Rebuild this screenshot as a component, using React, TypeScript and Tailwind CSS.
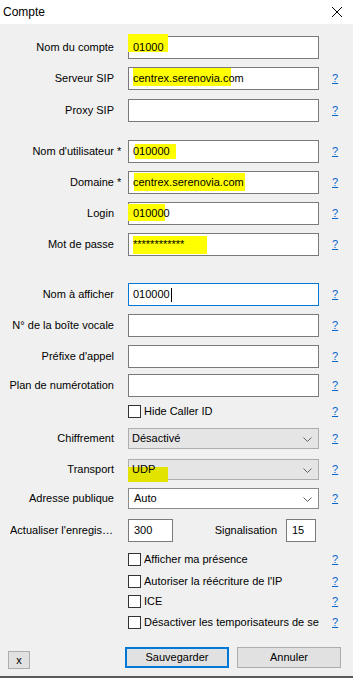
import React from "react";

function Help() {
  return <span className="ml-[13px] text-[11px] leading-none text-[#0066cc] underline">?</span>;
}

function Field({
  label,
  star,
  value,
  focused,
  hl,
  help = true,
  mt,
}: {
  label: string;
  star?: boolean;
  value?: string;
  focused?: boolean;
  hl?: string;
  help?: boolean;
  mt: string;
}) {
  return (
    <div className={`flex h-[23px] items-center ${mt}`}>
      <div className="w-[114px] text-right whitespace-nowrap">{label}</div>
      <div className="w-[14px] pl-[3px] text-[11px]">{star ? "*" : ""}</div>
      <div
        className={`relative flex h-[23px] w-[191px] items-center bg-white pl-[4px] ${
          focused ? "border border-[#0078d7]" : "border border-[#7a7a7a]"
        }`}
      >
        {hl && <span className={`absolute bg-[#ffff00] ${hl}`} />}
        <span className="relative whitespace-nowrap">{value}</span>
        {focused && <span className="relative ml-[1px] h-[14px] w-[1px] bg-black" />}
      </div>
      {help ? <Help /> : null}
    </div>
  );
}

function Chevron() {
  return (
    <svg width="9" height="5" viewBox="0 0 9 5" className="absolute right-[6px] top-[8px]">
      <path d="M0.5 0.5 L4.5 4.5 L8.5 0.5" fill="none" stroke="#606060" strokeWidth="1" />
    </svg>
  );
}

function Combo({ label, value, white, hl, mt }: { label: string; value: string; white?: boolean; hl?: boolean; mt: string }) {
  return (
    <div className={`flex h-[21px] items-center ${mt}`}>
      <div className="w-[114px] text-right whitespace-nowrap">{label}</div>
      <div className="w-[14px]" />
      <div
        className={`relative flex h-[21px] w-[191px] items-center border ${
          white ? "border-[#8a8a8a] bg-white pl-[5px]" : "border-[#adadad] bg-[#e5e5e5] pl-[3px]"
        }`}
      >
        {hl && <span className="absolute left-[-1px] top-[7px] h-[15px] w-[40px] bg-[#e3e300]" />}
        <span className="relative">{value}</span>
        <Chevron />
      </div>
      <Help />
    </div>
  );
}

function Check({ label, mt }: { label: string; mt: string }) {
  return (
    <div className={`flex h-[13px] items-center ${mt}`}>
      <div className="w-[128px]" />
      <div className="h-[13px] w-[13px] border border-[#333333] bg-white" />
      <div className="ml-[3px] w-[175px] overflow-hidden whitespace-nowrap">{label}</div>
      <Help />
    </div>
  );
}

export default function App() {
  return (
    <div className="flex h-[678px] w-[353px] flex-col bg-[#f0f0f0] font-['Liberation_Sans',Arial,sans-serif] text-[11px] text-black">
      {/* title bar */}
      <div className="flex h-[24px] items-center justify-between bg-white pl-[3px] pr-[11px]">
        <span className="text-[12px]">Compte</span>
        <svg width="10" height="10" viewBox="0 0 10 10">
          <path d="M0 0 L10 10 M10 0 L0 10" stroke="#000" strokeWidth="1" />
        </svg>
      </div>

      <Field label="Nom du compte" value="01000" help={false} mt="mt-[12px]" hl="left-[-1px] top-[-3px] h-[18px] w-[40px]" />
      <Field label="Serveur SIP" value="centrex.serenovia.com" mt="mt-[8px]" hl="left-[4px] top-[0px] h-[18px] w-[98px]" />
      <Field label="Proxy SIP" value="" mt="mt-[9px]" />

      <Field label="Nom d'utilisateur" star value="010000" mt="mt-[18px]" hl="left-[6px] top-[3px] h-[15px] w-[41px]" />
      <Field label="Domaine" star value="centrex.serenovia.com" mt="mt-[8px]" hl="left-[5px] top-[1px] h-[18px] w-[111px]" />
      <Field label="Login" value="010000" mt="mt-[8px]" hl="left-[-1px] top-[1px] h-[17px] w-[37px]" />
      <Field label="Mot de passe" value="************" mt="mt-[8px]" hl="left-[4px] top-[2px] h-[18px] w-[74px]" />

      <Field label="Nom à afficher" value="010000" focused mt="mt-[27px]" />
      <Field label="N° de la boîte vocale" value="" mt="mt-[8px]" />
      <Field label="Préfixe d'appel" value="" mt="mt-[8px]" />
      <Field label="Plan de numérotation" value="" mt="mt-[6px]" />

      <Check label="Hide Caller ID" mt="mt-[8px]" />

      <Combo label="Chiffrement" value="Désactivé" mt="mt-[10px]" />
      <Combo label="Transport" value="UDP" hl mt="mt-[10px]" />
      <Combo label="Adresse publique" value="Auto" white mt="mt-[8px]" />

      <div className="mt-[10px] flex h-[23px] items-center">
        <div className="ml-[10px] w-[104px] truncate">Actualiser l'enregistrement</div>
        <div className="ml-[14px] flex h-[23px] w-[45px] items-center border border-[#7a7a7a] bg-white pl-[5px]">300</div>
        <div className="w-[104px] text-right">Signalisation</div>
        <div className="ml-[9px] flex h-[23px] w-[30px] items-center border border-[#7a7a7a] bg-white pl-[5px]">15</div>
      </div>

      <Check label="Afficher ma présence" mt="mt-[11px]" />
      <Check label="Autoriser la réécriture de l'IP" mt="mt-[9px]" />
      <Check label="ICE" mt="mt-[7px]" />
      <Check label="Désactiver les temporisateurs de session" mt="mt-[8px]" />

      <div className="mt-[18px] flex h-[21px] items-start">
        <div className="ml-[8px] mt-[4px] flex h-[18px] w-[22px] items-center justify-center border border-[#adadad] bg-[#e1e1e1]">
          x
        </div>
        <div className="ml-[95px] flex h-[21px] w-[104px] items-center justify-center border-2 border-[#0078d7] bg-[#e1e1e1]">
          Sauvegarder
        </div>
        <div className="ml-[8px] flex h-[21px] w-[104px] items-center justify-center border border-[#adadad] bg-[#e1e1e1]">
          Annuler
        </div>
      </div>

      <div className="mt-auto h-[2px] bg-[#5a5a5a]" />
    </div>
  );
}
